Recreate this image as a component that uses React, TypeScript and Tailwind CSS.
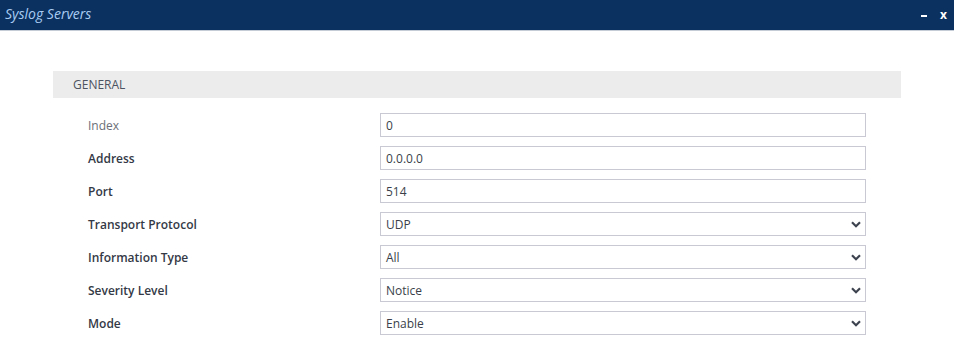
import React from "react";

const rows: { label: string; value: string; select?: boolean; light?: boolean }[] = [
  { label: "Index", value: "0", light: true },
  { label: "Address", value: "0.0.0.0" },
  { label: "Port", value: "514" },
  { label: "Transport Protocol", value: "UDP", select: true },
  { label: "Information Type", value: "All", select: true },
  { label: "Severity Level", value: "Notice", select: true },
  { label: "Mode", value: "Enable", select: true },
];

function Chevron() {
  return (
    <svg width="10" height="7" viewBox="0 0 10 7" className="text-[#3d4450]">
      <path d="M1 1.2 L5 5.2 L9 1.2" fill="none" stroke="currentColor" strokeWidth="2.2" />
    </svg>
  );
}

export default function App() {
  return (
    <div className="w-[954px] h-[344px] bg-white overflow-hidden" style={{ fontFamily: '"Open Sans", sans-serif' }}>
      <div className="h-[31px] bg-[#0b3160] border-b border-[#c5ccd6] flex items-center justify-between">
        <span className="pl-[5px] text-[14px] italic text-[#a9ccf3] leading-none -mt-[2px]">Syslog Servers</span>
        <div className="flex items-center pr-[7px] gap-[13px] text-white font-bold">
          <span className="block w-[6px] h-[2px] bg-white mt-[1px]" />
          <span className="text-[12px] leading-none -mt-[1px]">x</span>
        </div>
      </div>
      <div className="pt-[40px] pl-[53px]">
        <div className="w-[848px] h-[27px] bg-[#ececec] flex items-center pl-[20px] pt-[1px] text-[12px] text-[#4d5360]">
          GENERAL
        </div>
        <div className="mt-[15px] flex flex-col gap-[9px]">
          {rows.map((r) => (
            <div key={r.label} className="flex items-center h-[24px]">
              <div
                className={
                  r.light
                    ? "w-[327px] pl-[35px] pt-[2px] text-[12px] text-[#6b6f78]"
                    : "w-[327px] pl-[35px] pt-[2px] text-[12px] text-[#343946] font-semibold"
                }
              >
                {r.label}
              </div>
              <div className="w-[486px] h-[24px] border border-[#c8c9d2] flex items-center justify-between pl-[5px] pr-[4px] text-[12px] text-[#3a3f4a]">
                <span className="pt-[2px]">{r.value}</span>
                {r.select && <Chevron />}
              </div>
            </div>
          ))}
        </div>
      </div>
    </div>
  );
}
